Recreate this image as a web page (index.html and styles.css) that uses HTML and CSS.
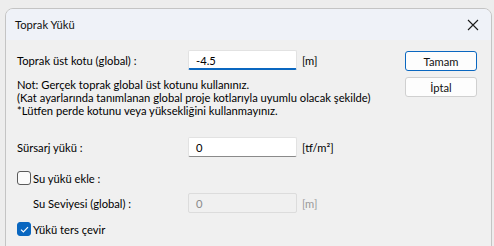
FILE: index.html
```html
<!DOCTYPE html>
<html>
<head>
<meta charset="utf-8">
<link rel="stylesheet" href="styles.css">
</head>
<body>
<div class="window">
  <div class="titlebar">
    <span class="title">Toprak Yükü</span>
    <svg class="close" width="12" height="12" viewBox="0 0 12 12"><path d="M1 1L11 11M11 1L1 11" stroke="#1a1a1a" stroke-width="1.1" fill="none"/></svg>
  </div>
  <div class="content">
    <div class="main">
      <div class="row r1">
        <span class="label">Toprak üst kotu (global) :</span>
        <div class="input active">-4.5</div>
        <span class="unit">[m]</span>
      </div>
      <div class="note">
        <div>Not: Gerçek toprak global üst kotunu kullanınız.</div>
        <div>(Kat ayarlarında tanımlanan global proje kotlarıyla uyumlu olacak şekilde)</div>
        <div>*Lütfen perde kotunu veya yüksekliğini kullanmayınız.</div>
      </div>
      <div class="row r2">
        <span class="label">Sürsarj yükü :</span>
        <div class="input">0</div>
        <span class="unit">[tf/m²]</span>
      </div>
      <div class="check r3">
        <span class="box"></span>
        <span>Su yükü ekle :</span>
      </div>
      <div class="row r4">
        <span class="label indent">Su Seviyesi (global) :</span>
        <div class="input disabled">0</div>
        <span class="unit dis">[m]</span>
      </div>
      <div class="check r5">
        <span class="box on"><svg width="9" height="7" viewBox="0 0 9 7"><path d="M1 3.6L3.4 6L8 1.2" stroke="#fff" stroke-width="1.2" fill="none"/></svg></span>
        <span>Yükü ters çevir</span>
      </div>
    </div>
    <div class="buttons">
      <button class="btn primary">Tamam</button>
      <button class="btn">İptal</button>
    </div>
  </div>
</div>
</body>
</html>
```
FILE: styles.css
```css
* { box-sizing: border-box; }
html, body { margin: 0; padding: 0; }
body {
  background: #ededed;
  font-family: "Lato", "Segoe UI", sans-serif;
  font-size: 11.2px;
  color: #000;
  width: 494px;
  height: 246px;
  overflow: hidden;
}
.window {
  margin: 8px 0 0 5px;
  width: 487px;
  height: 260px;
  border: 1px solid #c4c4c4;
  border-radius: 8px 8px 0 0;
  background: #f0f0f0;
  overflow: hidden;
}
.titlebar {
  height: 31px;
  background: #eff2f8;
  display: flex;
  align-items: center;
  justify-content: space-between;
  padding: 0 10px 0 9px;
}
.title { font-size: 11.2px; color: #111; }
.close { margin-right: 2px; }
.content {
  display: flex;
  padding: 10px 0 0 11px;
}
.main { width: 388px; white-space: nowrap; }
.row {
  display: flex;
  align-items: center;
  height: 20px;
}
.label { width: 171px; }
.label.indent { padding-left: 16px; }
.input {
  width: 109px;
  height: 20px;
  background: #fff;
  border: 1px solid #e2e2e2;
  border-bottom: 1px solid #8a8a8a;
  border-radius: 2px;
  padding: 1px 0 0 7px;
  line-height: 17px;
}
.input.active {
  border-bottom: 2px solid #0a67c0;
}
.input.disabled {
  background: #f0f0f0;
  border: 1px solid #dcdcdc;
  color: #8a8a8a;
}
.unit { margin-left: 5px; }
.unit.dis { color: #9a9a9a; }
.note {
  margin-top: 8px;
  line-height: 13px;
}
.r2 { margin-top: 20px; }
.check {
  display: flex;
  align-items: center;
  height: 14px;
}
.r3 { margin-top: 14px; }
.r4 { margin-top: 8px; }
.r5 { margin-top: 9px; }
.box {
  width: 14px;
  height: 14px;
  border: 1px solid #5a5a5a;
  border-radius: 3px;
  margin-right: 2px;
  background: #fbfbfb;
  display: flex;
  align-items: center;
  justify-content: center;
}
.box.on {
  background: #0a67c0;
  border-color: #0a67c0;
}
.buttons {
  display: flex;
  flex-direction: column;
  gap: 6px;
  padding-top: 1px;
}
.btn {
  width: 72px;
  height: 20px;
  font-family: inherit;
  font-size: 11.2px;
  color: #111;
  background: #fdfdfd;
  border: 1px solid #d0d0d0;
  border-radius: 3px;
  padding: 0;
}
.btn.primary {
  border: 1px solid #0a67c0;
}
```
